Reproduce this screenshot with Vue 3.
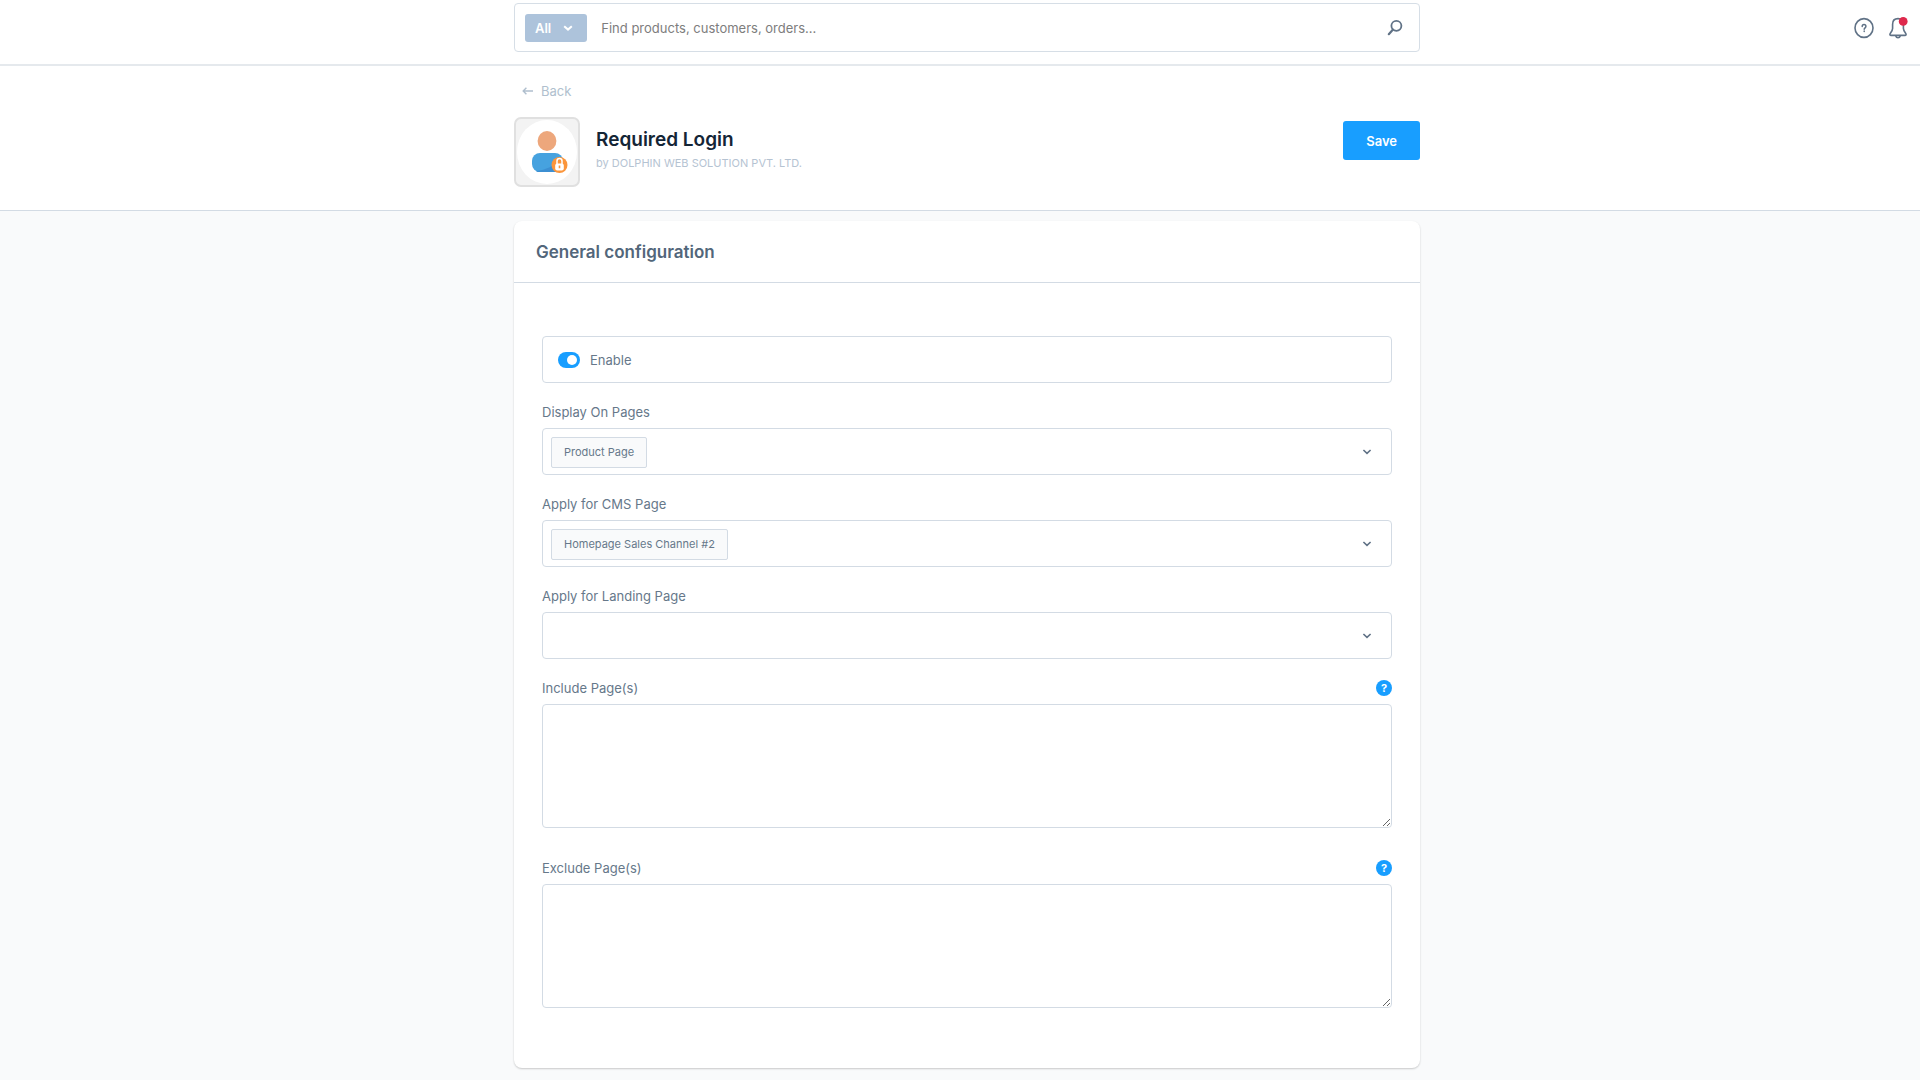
<template>
  <div class="page">
    <header class="topbar">
      <form class="search" role="search" @submit.prevent>
        <button type="button" class="search-type">
          All
          <svg width="10" height="6" viewBox="0 0 10 6" aria-hidden="true">
            <path d="M1.2 1.2 5 4.6 8.8 1.2" />
          </svg>
        </button>
        <input
          v-model="searchTerm"
          type="text"
          class="search-input"
          placeholder="Find products, customers, orders..."
          aria-label="Search"
        />
        <button type="submit" class="icon-btn" aria-label="Start search">
          <svg width="16" height="18" viewBox="0 0 16 18">
            <circle cx="9.4" cy="6.8" r="5" stroke-width="1.8" />
            <path d="M6 10.6 1.8 15.2" stroke-width="2.2" />
          </svg>
        </button>
      </form>
      <div class="topbar-actions">
        <button type="button" class="icon-btn" aria-label="Help">
          <svg width="20" height="22" viewBox="0 0 20 22">
            <ellipse cx="10" cy="11" rx="9" ry="9.4" stroke-width="1.6" />
            <path d="M8.2 9.4c0-2.4 3.7-2.4 3.7 0 0 1.4-1.7 1.5-1.7 2.9M10.2 14v.6" stroke-width="1.5" />
          </svg>
        </button>
        <button type="button" class="icon-btn" aria-label="Notifications">
          <svg width="20" height="24" viewBox="0 0 20 24">
            <path
              d="M10 2.6c-3.4 0-5.4 2.4-5.4 5.6v4.4c0 1.6-.6 2.6-2.2 4.6-.9 1.2-.6 2.2.8 2.2h13.6c1.4 0 1.7-1 .8-2.2-1.6-2-2.2-3-2.2-4.6V8.2c0-3.2-2-5.6-5.4-5.6Z"
              stroke-width="1.6"
            />
            <path d="M8 20.4c.4 1.6 3.6 1.6 4 0" stroke-width="1.8" />
            <circle class="bell-dot" cx="15.2" cy="5.4" r="4.4" />
          </svg>
        </button>
      </div>
    </header>

    <section class="page-head">
      <div class="column">
        <a href="#" class="back">
          <svg width="12" height="10" viewBox="0 0 12 10" aria-hidden="true">
            <path d="M11 5H1.4M4.4 1.8 1.2 5l3.2 3.2" />
          </svg>
          Back
        </a>
        <div class="plugin">
          <div class="plugin-icon">
            <svg width="62" height="66" viewBox="0 0 62 66" aria-hidden="true">
              <ellipse cx="31" cy="33" rx="30" ry="32" fill="#fff" />
              <ellipse cx="31" cy="22" rx="9.4" ry="10" fill="#eda77c" />
              <rect x="16" y="34" width="31" height="19" rx="8" fill="#46a2df" />
              <path d="M20 52c10-1 18-5 26-13 2 6 1 14-6 14H24c-2 0-3 0-4-1Z" fill="#3c8fd2" />
              <circle cx="43.5" cy="46" r="8" fill="#fb953b" />
              <path d="M41 45v-3c0-3.4 5-3.4 5 0v3" fill="none" stroke="#fff" stroke-width="1.5" />
              <rect x="39.2" y="44.4" width="8.6" height="7" rx="2" fill="#fff" />
              <path d="M43.5 46.6v2.6" stroke="#fb953b" stroke-width="1.6" />
            </svg>
          </div>
          <div class="plugin-text">
            <h1>Required Login</h1>
            <p>by DOLPHIN WEB SOLUTION PVT. LTD.</p>
          </div>
          <button type="button" class="save">Save</button>
        </div>
      </div>
    </section>

    <main class="content">
      <section class="card column">
        <h2>General configuration</h2>
        <div class="card-body">
          <label class="switch-box">
            <input v-model="enabled" type="checkbox" class="switch" />
            Enable
          </label>

          <div v-for="field in selects" :key="field.id" class="field">
            <div class="field-label">
              <label :for="field.id">{{ field.label }}</label>
            </div>
            <div class="select-box">
              <span v-for="item in field.selected" :key="item" class="chip">{{ item }}</span>
              <select :id="field.id" v-model="field.current">
                <option value=""></option>
              </select>
              <svg width="10" height="8" viewBox="0 0 10 8" aria-hidden="true">
                <path d="M1.4 2 5 5.4 8.6 2" />
              </svg>
            </div>
          </div>

          <div v-for="field in textareas" :key="field.id" class="field field-text">
            <div class="field-label">
              <label :for="field.id">{{ field.label }}</label>
              <button type="button" class="help" :aria-label="'Help for ' + field.label">?</button>
            </div>
            <textarea :id="field.id" v-model="field.value"></textarea>
          </div>
        </div>
      </section>
    </main>
  </div>
</template>

<script setup>
import { ref } from "vue";

const searchTerm = ref("");
const enabled = ref(true);

const selects = ref([
  { id: "displayPages", label: "Display On Pages", selected: ["Product Page"], current: "" },
  { id: "cmsPage", label: "Apply for CMS Page", selected: ["Homepage Sales Channel #2"], current: "" },
  { id: "landingPage", label: "Apply for Landing Page", selected: [], current: "" },
]);

const textareas = ref([
  { id: "includePages", label: "Include Page(s)", value: "" },
  { id: "excludePages", label: "Exclude Page(s)", value: "" },
]);
</script>

<style>
body {
  background: #f9fafb;
}
</style>

<style scoped>
.page {
  min-height: 100vh;
  font-family: Inter, "Liberation Sans", sans-serif;
  font-size: 13px;
  line-height: 16px;
  color: #66788a;
}
.page,
.page * {
  box-sizing: border-box;
}
button,
input,
select,
textarea {
  font: inherit;
  color: inherit;
  margin: 0;
}
button {
  border: 0;
  padding: 0;
  background: none;
  cursor: pointer;
}
svg {
  display: block;
  flex: none;
}

/* top bar */
.topbar {
  display: grid;
  grid-template-columns: 1fr minmax(0, 906px) 1fr;
  padding: 3px 12px 12px 26px;
  background: #fff;
  border-bottom: 2px solid #e5e9ed;
}
.search {
  grid-column: 2;
  display: flex;
  align-items: center;
  height: 49px;
  padding: 0 16px 0 10px;
  border: 1px solid #d6dee6;
  border-radius: 4px;
}
.search-type {
  display: flex;
  align-items: center;
  gap: 12px;
  height: 28px;
  padding: 0 14px 0 10px;
  border-radius: 3px;
  background: #adc3db;
  color: #fff;
  font-weight: 600;
}
.search-type svg {
  fill: none;
  stroke: #fff;
  stroke-width: 2;
}
.search-input {
  flex: 1;
  min-width: 0;
  padding: 0 14px;
  border: 0;
  outline: 0;
  background: none;
}
.search-input::placeholder {
  color: #7d7d7d;
  opacity: 1;
}
.icon-btn svg {
  fill: none;
  stroke: #607286;
  stroke-linecap: round;
  stroke-linejoin: round;
}
.icon-btn .bell-dot {
  fill: #de294c;
  stroke: none;
}
.topbar-actions {
  display: flex;
  align-items: center;
  justify-content: flex-end;
  gap: 14px;
}

.column {
  width: 100%;
  max-width: 906px;
  margin: 0 auto;
}

/* plugin header */
.page-head {
  padding: 17px 0 23px 14px;
  background: #fff;
  border-bottom: 1px solid #d3dbe4;
}
.back {
  display: inline-flex;
  align-items: center;
  gap: 7px;
  margin-left: 8px;
  color: #b0bfce;
  text-decoration: none;
}
.back svg {
  fill: none;
  stroke: #b0bfce;
  stroke-width: 1.4;
}
.plugin {
  display: flex;
  align-items: center;
  margin-top: 18px;
}
.plugin-icon {
  overflow: hidden;
  border: 2px solid #e0e0e0;
  border-radius: 7px;
  background: #f3f3f3;
}
.plugin-text {
  flex: 1;
  margin-left: 16px;
  padding-bottom: 6px;
}
h1 {
  margin: 0;
  font-size: 19px;
  line-height: 24px;
  font-weight: 600;
  color: #142536;
}
.plugin-text p {
  margin: 3px 0 0;
  font-size: 11px;
  color: #b5c3d2;
}
.save {
  align-self: flex-start;
  height: 39px;
  margin-top: 4px;
  padding: 0 23px;
  border-radius: 3px;
  background: #189eff;
  color: #fff;
  font-weight: 600;
}

/* card */
.content {
  padding: 10px 0 10px 14px;
}
.card {
  border-radius: 8px;
  background: #fff;
  box-shadow: 0 1px 2px rgba(0, 0, 0, 0.2);
}
h2 {
  margin: 0;
  padding: 21px 22px 19px;
  border-bottom: 1px solid #d3dbe4;
  font-size: 17px;
  line-height: 21px;
  font-weight: 600;
  color: #52667a;
}
.card-body {
  padding: 53px 28px 49px;
}
.switch-box,
.select-box {
  display: flex;
  align-items: center;
  height: 47px;
  border: 1px solid #d3dbe4;
  border-radius: 4px;
}
.switch-box {
  gap: 10px;
  padding: 0 15px;
}
.switch {
  appearance: none;
  display: flex;
  width: 22px;
  height: 16px;
  padding: 3px;
  border-radius: 8px;
  background: #c2ccd6;
}
.switch::before {
  content: "";
  width: 10px;
  height: 10px;
  border-radius: 50%;
  background: #fff;
}
.switch:checked {
  justify-content: flex-end;
  background: #189eff;
}
.field {
  margin-top: 21px;
}
.field-label {
  display: flex;
  align-items: center;
  justify-content: space-between;
  height: 16px;
  margin-bottom: 8px;
}
.select-box {
  padding: 1px 19px 0 8px;
}
.chip {
  height: 31px;
  padding: 0 12px;
  border: 1px solid #d3dbe4;
  border-radius: 2px;
  background: #f9fafb;
  font-size: 11px;
  line-height: 29px;
}
.select-box select {
  flex: 1;
  min-width: 0;
  height: 100%;
  appearance: none;
  border: 0;
  outline: 0;
  background: none;
}
.select-box svg {
  fill: none;
  stroke: #607286;
  stroke-width: 1.6;
}
.field-text {
  padding-bottom: 11px;
}
.help {
  width: 16px;
  height: 16px;
  border-radius: 50%;
  background: #189eff;
  color: #fff;
  font-size: 11px;
  font-weight: 700;
  line-height: 16px;
}
textarea {
  display: block;
  width: 100%;
  height: 124px;
  padding: 12px 16px;
  border: 1px solid #d3dbe4;
  border-radius: 4px;
  outline: 0;
  resize: vertical;
}
</style>
